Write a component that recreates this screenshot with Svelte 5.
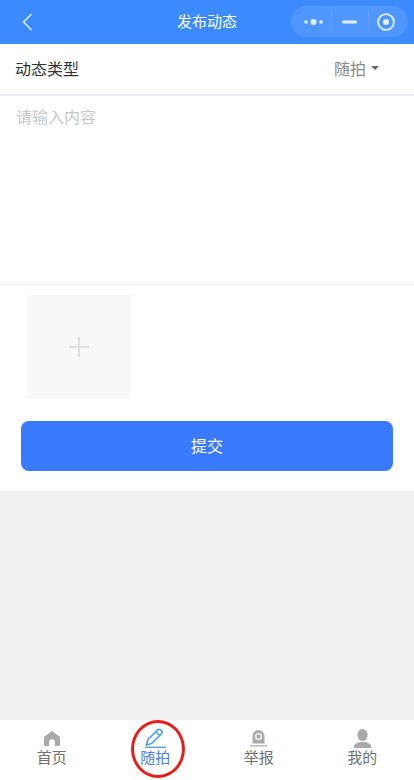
<script>
  const tabs = [
    { key: "home", label: "首页" },
    { key: "shot", label: "随拍", active: true },
    { key: "report", label: "举报" },
    { key: "mine", label: "我的" }
  ];
</script>

<div class="page">
  <header class="navbar">
    <svg class="back" width="11" height="18" viewBox="0 0 11 18">
      <path d="M9.5 1 L1.5 9 L9.5 17" fill="none" stroke="#e4eeff" stroke-width="1.5" />
    </svg>
    <span class="title">发布动态</span>
    <div class="capsule">
      <span class="cap-cell more">
        <svg width="19" height="8" viewBox="0 0 19 8">
          <circle cx="2" cy="4" r="1.8" fill="#e4eeff" />
          <circle cx="9.5" cy="4" r="3" fill="#e4eeff" />
          <circle cx="17" cy="4" r="1.8" fill="#e4eeff" />
        </svg>
      </span>
      <i class="sep"></i>
      <span class="cap-cell minus">
        <svg width="15" height="4" viewBox="0 0 15 4">
          <rect width="15" height="3" y="0.5" rx="1.5" fill="#e4eeff" />
        </svg>
      </span>
      <i class="sep"></i>
      <span class="cap-cell home-dot">
        <svg width="18" height="18" viewBox="0 0 18 18">
          <circle cx="9" cy="9" r="7.9" fill="none" stroke="#e4eeff" stroke-width="1.8" />
          <circle cx="9" cy="9" r="3" fill="#e4eeff" />
        </svg>
      </span>
    </div>
  </header>

  <section class="form">
    <div class="type-row">
      <span class="type-label">动态类型</span>
      <span class="type-value">随拍<i class="caret"></i></span>
    </div>
    <div class="content">请输入内容</div>
    <div class="uploader-wrap">
      <div class="uploader">
        <svg width="22" height="22" viewBox="0 0 22 22">
          <path d="M11 1 V21 M1 11 H21" stroke="#dcdee0" stroke-width="2" />
        </svg>
      </div>
    </div>
    <div class="submit-wrap">
      <button class="submit">提交</button>
    </div>
  </section>

  <div class="spacer"></div>

  <nav class="tabbar">
    {#each tabs as tab}
      <div class="tab" class:active={tab.active}>
        <span class="tab-icon">
          {#if tab.key === "home"}
            <svg width="16" height="15" viewBox="0 0 16 15">
              <path d="M8 0 L16 6 V15 H10.8 V10 Q10.8 8.6 8 8.6 Q5.2 8.6 5.2 10 V15 H0 V6 Z" fill="#a9a9a9" />
            </svg>
          {:else if tab.key === "shot"}
            <svg class="pen" width="21" height="20" viewBox="0 0 21 20">
              <path d="M1.5 17 L3 11.5 L12.5 2.2 Q14 0.8 15.7 2 L16.8 3.1 Q17.8 4.6 16.4 6 L6.8 15.4 Z M11 4 L15 8" fill="none" stroke="#4aa3df" stroke-width="1.6" />
              <path d="M0 19.4 H21" stroke="#4aa3df" stroke-width="1.5" />
            </svg>
          {:else if tab.key === "report"}
            <svg width="17" height="17" viewBox="0 0 17 17">
              <path d="M2.5 13.5 V6 a6 6 0 0 1 12 0 V13.5 Z" fill="#a9a9a9" />
              <circle cx="8.5" cy="6.5" r="3.8" fill="#e8e8e8" />
              <circle cx="8.5" cy="6.5" r="2" fill="#a9a9a9" />
              <rect x="0" y="15" width="17" height="1.6" fill="#bdbdbd" />
            </svg>
          {:else}
            <svg width="17" height="19" viewBox="0 0 17 19">
              <ellipse cx="8.5" cy="6" rx="5.2" ry="6" fill="#a9a9a9" />
              <path d="M0 19 V17 Q0.5 14.5 5.5 13 H11.5 Q16.5 14.5 17 17 V19 Z" fill="#a9a9a9" />
            </svg>
          {/if}
        </span>
        <span class="tab-label">{tab.label}</span>
        {#if tab.active}
          <span class="ring"></span>
        {/if}
      </div>
    {/each}
  </nav>
</div>

<style>
  :global(body) {
    margin: 0;
    font-family: "Liberation Sans", "Noto Sans CJK SC", sans-serif;
  }
  .page {
    width: 414px;
    height: 780px;
    display: flex;
    flex-direction: column;
    background: #f1f1f1;
    overflow: hidden;
  }
  .navbar {
    height: 44px;
    flex: none;
    background: #3b8bff;
    display: flex;
    align-items: center;
    justify-content: space-between;
    padding: 0 6px 0 22px;
    position: relative;
    box-sizing: border-box;
  }
  .title {
    position: absolute;
    left: 0;
    right: 0;
    top: 11px;
    line-height: 22px;
    text-align: center;
    color: #fff;
    font-size: 15px;
    pointer-events: none;
  }
  .capsule {
    width: 117px;
    height: 31px;
    border-radius: 16px;
    background: #4f97ff;
    display: grid;
    grid-template-columns: 40px 1px 36px 1px 39px;
    align-items: center;
    margin-bottom: 1px;
  }
  .cap-cell {
    display: flex;
    align-items: center;
    justify-content: center;
  }
  .more {
    padding-left: 4px;
  }
  .minus {
    padding-right: 2px;
  }
  .home-dot {
    padding-right: 5px;
  }
  .sep {
    height: 20px;
    background: #62a1ff;
  }
  .form {
    background: #fff;
    flex: none;
  }
  .type-row {
    height: 48px;
    display: flex;
    align-items: center;
    justify-content: space-between;
    padding: 0 35px 2px 15px;
    border-bottom: 2px solid #e8e8f4;
  }
  .type-label {
    font-size: 16px;
    color: #333;
  }
  .type-value {
    font-size: 16px;
    color: #8a8a8a;
    display: flex;
    align-items: center;
  }
  .caret {
    width: 0;
    height: 0;
    border-left: 4px solid transparent;
    border-right: 4px solid transparent;
    border-top: 4px solid #666;
    margin-left: 5px;
  }
  .content {
    height: 189px;
    box-sizing: border-box;
    padding: 11px 16px;
    font-size: 16px;
    line-height: 22px;
    color: #c8c9cc;
    border-bottom: 1px solid #ececec;
  }
  .uploader-wrap {
    padding: 10px 27px 0;
  }
  .uploader {
    width: 104px;
    height: 104px;
    background: #f7f8fa;
    display: flex;
    align-items: center;
    justify-content: center;
  }
  .submit-wrap {
    padding: 22px 21px 20px;
  }
  .submit {
    display: block;
    width: 100%;
    height: 50px;
    padding: 0 0 3px;
    border: none;
    border-radius: 8px;
    background: #3a7afe;
    color: #fff;
    font-family: inherit;
    font-size: 16px;
  }
  .spacer {
    flex: 1;
  }
  .tabbar {
    height: 60px;
    flex: none;
    background: #fff;
    display: flex;
  }
  .tab {
    flex: 1;
    position: relative;
    display: flex;
    flex-direction: column;
    align-items: center;
    padding-top: 8px;
    box-sizing: border-box;
  }
  .tab-icon {
    height: 20px;
    display: flex;
    align-items: center;
    justify-content: center;
  }
  .tab-label {
    font-size: 15px;
    line-height: 20px;
    color: #717171;
  }
  .tab.active .tab-label {
    color: #4f7fe8;
  }
  .ring {
    position: absolute;
    left: 27px;
    top: 0;
    width: 54px;
    height: 58px;
    box-sizing: border-box;
    border: 3px solid #e3201b;
    border-radius: 50%;
  }
</style>
